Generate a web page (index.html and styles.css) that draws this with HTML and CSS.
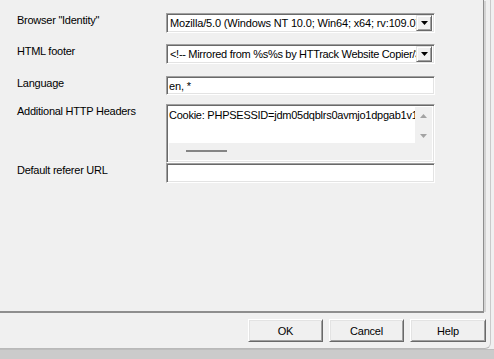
FILE: index.html
```html
<!DOCTYPE html>
<html lang="en">
<head>
    <meta charset="UTF-8">
    <title>Options</title>
    <link rel="stylesheet" href="styles.css">
</head>
<body>
    <div class="dialog">
        <div class="page">
            <div class="form">
                <div class="row row-browser">
                    <span class="label">Browser "Identity"</span>
                    <div class="field combo">
                        <span class="value">Mozilla/5.0 (Windows NT 10.0; Win64; x64; rv:109.0) Gecko/20100101 Firefox/115.0</span>
                        <span class="drop-button">
                            <svg width="7" height="4" viewBox="0 0 7 4"><polygon points="0,0 7,0 3.5,4" fill="#000"/></svg>
                        </span>
                    </div>
                </div>
                <div class="row row-footer">
                    <span class="label">HTML footer</span>
                    <div class="field combo">
                        <span class="value">&lt;!-- Mirrored from %s%s by HTTrack Website Copier/3.x [XR&amp;CO'2014], %s --&gt;</span>
                        <span class="drop-button">
                            <svg width="7" height="4" viewBox="0 0 7 4"><polygon points="0,0 7,0 3.5,4" fill="#000"/></svg>
                        </span>
                    </div>
                </div>
                <div class="row row-language">
                    <span class="label">Language</span>
                    <div class="field edit">
                        <span class="value">en, *</span>
                    </div>
                </div>
                <div class="row row-headers">
                    <span class="label">Additional HTTP Headers</span>
                    <div class="field memo">
                        <div class="memo-body">
                            <span class="memo-text">Cookie: PHPSESSID=jdm05dqblrs0avmjo1dpgab1v1</span>
                            <div class="vscroll">
                                <svg width="7" height="4" viewBox="0 0 7 4"><polygon points="0,4 7,4 3.5,0" fill="#a3a3a3"/></svg>
                                <svg width="7" height="4" viewBox="0 0 7 4"><polygon points="0,0 7,0 3.5,4" fill="#a3a3a3"/></svg>
                            </div>
                        </div>
                        <div class="hscroll">
                            <div class="hthumb"></div>
                        </div>
                    </div>
                </div>
                <div class="row row-referer">
                    <span class="label">Default referer URL</span>
                    <div class="field edit">
                        <span class="value"></span>
                    </div>
                </div>
            </div>
        </div>

        <div class="buttons">
            <button class="btn">OK</button>
            <button class="btn">Cancel</button>
            <button class="btn btn-help">Help</button>
        </div>
    </div>
    <div class="band"></div>
</body>
</html>
```

FILE: styles.css
```css
:root {
    --face: #f0f0f0;
    --light: #ffffff;
    --soft: #e3e3e3;
    --shadow: #a0a0a0;
    --dark: #696969;
}

* {
    box-sizing: border-box;
}

body {
    margin: 0;
    width: 494px;
    height: 359px;
    overflow: hidden;
    background-color: var(--face);
    font-family: "Liberation Sans", Arial, sans-serif;
    font-size: 11px;
    line-height: 13px;
    color: #000;
}

.dialog {
    width: 491px;
    height: 349px;
    border-right: 1px solid #c9c9c9;
    border-bottom: 1px solid #b9b9b9;
    border-bottom-right-radius: 6px;
    background-color: var(--face);
}

.page {
    width: 484px;
    height: 313px;
    border-right: 1px solid #8e8e8e;
    border-bottom: 2px solid #8e8e8e;
    box-shadow: 3px 0 0 -1px #d4d4d4;
}

.form {
    padding: 13px 0 0 17px;
}

.row {
    display: grid;
    grid-template-columns: 149px 269px;
    align-items: start;
}

.row-footer { margin-top: 11px; }
.row-language { margin-top: 12px; }
.row-headers { margin-top: 9px; }

.label {
    padding-top: 1px;
    letter-spacing: -0.25px;
    white-space: nowrap;
}

/* sunken 3d frame, like the old win32 edit controls */
.field {
    border-top: 1px solid var(--shadow);
    border-left: 1px solid var(--shadow);
    border-right: 1px solid var(--light);
    border-bottom: 1px solid var(--light);
    box-shadow: inset 1px 1px 0 var(--dark), inset -1px -1px 0 var(--soft);
    background-color: #fff;
    overflow: hidden;
}

.value {
    display: block;
    white-space: nowrap;
    overflow: hidden;
    letter-spacing: -0.15px;
}

.row-footer .value {
    letter-spacing: -0.3px;
}

.combo {
    height: 20px;
    display: flex;
    align-items: center;
    padding: 2px 2px 2px 3px;
}

.combo .value {
    flex: 1;
}

.drop-button {
    width: 16px;
    height: 16px;
    flex: none;
    display: flex;
    align-items: center;
    justify-content: center;
    background-color: var(--face);
    border-top: 1px solid var(--soft);
    border-left: 1px solid var(--soft);
    border-right: 1px solid var(--dark);
    border-bottom: 1px solid var(--dark);
    box-shadow: inset 1px 1px 0 var(--light), inset -1px -1px 0 var(--shadow);
}

.edit {
    height: 19px;
    padding: 3px 2px 0 2px;
}

.row-referer .edit {
    height: 20px;
}

.memo {
    height: 59px;
    padding: 2px;
    display: flex;
    flex-direction: column;
}

.memo-body {
    flex: 1;
    display: flex;
}

.memo-text {
    flex: 1;
    padding: 2px 0 0 0;
    white-space: nowrap;
    overflow: hidden;
    letter-spacing: -0.25px;
}

.vscroll {
    width: 17px;
    flex: none;
    background-color: var(--face);
    display: flex;
    flex-direction: column;
    justify-content: space-between;
    align-items: center;
    padding: 7px 0 5px 0;
}

.hscroll {
    height: 17px;
    background-color: var(--face);
    padding: 7px 0 0 17px;
}

.hthumb {
    width: 41px;
    height: 2px;
    background-color: #858585;
}

.buttons {
    display: flex;
    justify-content: flex-end;
    gap: 6px;
    padding: 6px 4px 0 0;
}

.btn {
    width: 75px;
    height: 23px;
    margin: 0;
    padding: 0;
    font-family: "Liberation Sans", Arial, sans-serif;
    font-size: 11px;
    color: #000;
    background-color: var(--face);
    border-top: 1px solid var(--light);
    border-left: 1px solid var(--light);
    border-right: 1px solid var(--dark);
    border-bottom: 1px solid var(--dark);
    box-shadow: inset 1px 1px 0 var(--soft), inset -1px -1px 0 var(--shadow);
    letter-spacing: -0.2px;
}

.btn-help {
    width: 76px;
}

.band {
    height: 10px;
    background-color: #cbcbcb;
    border-top: 1px solid #bdbdbd;
}
```
